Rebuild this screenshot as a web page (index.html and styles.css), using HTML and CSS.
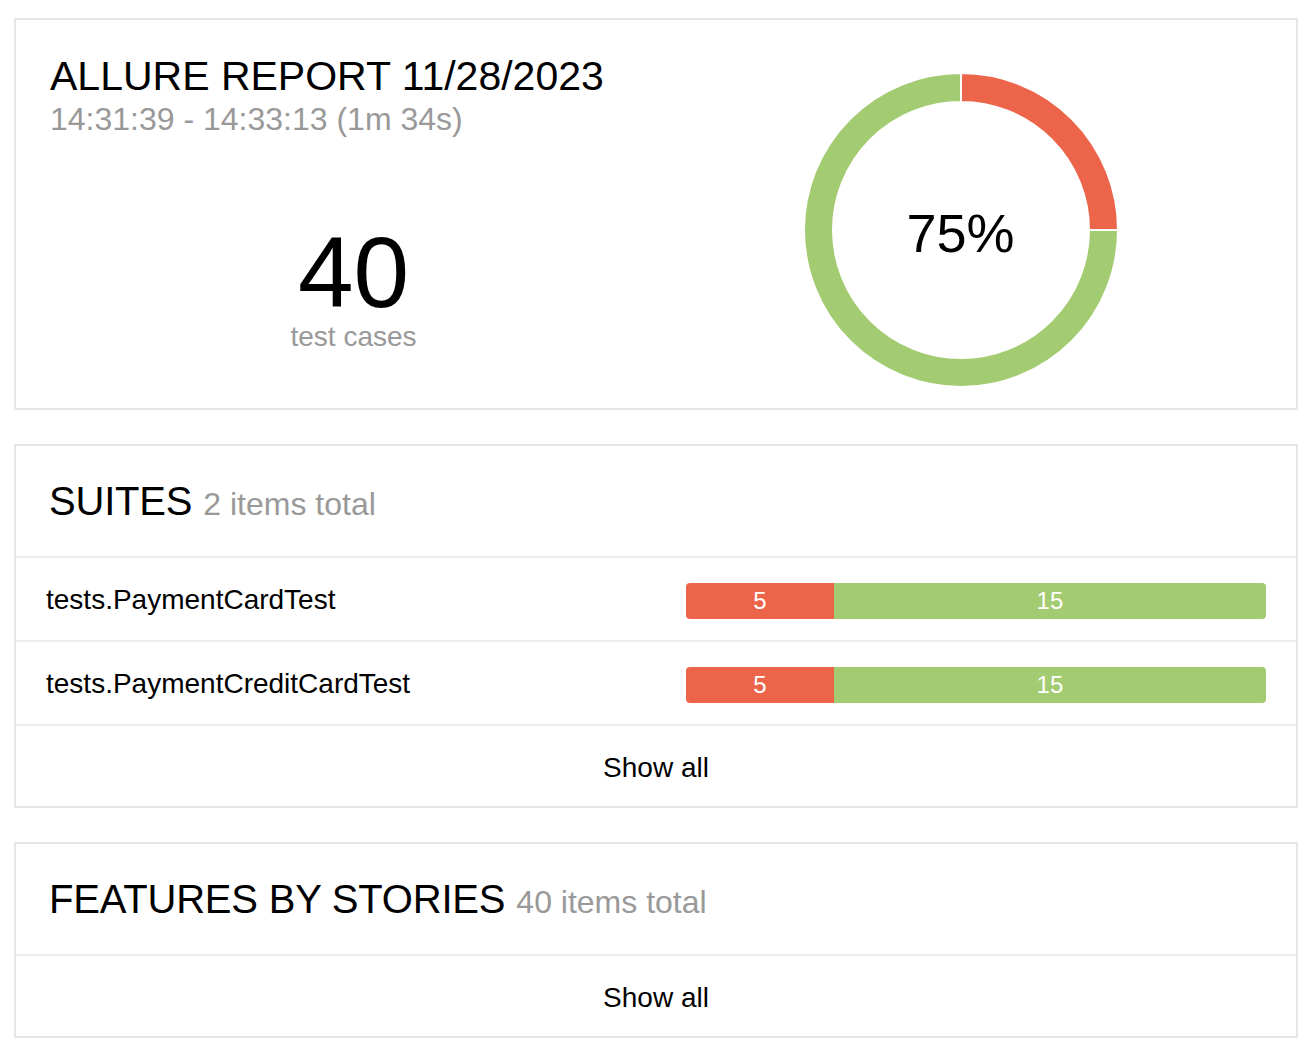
FILE: index.html
```html
<!DOCTYPE html>
<html lang="en">
<head>
<meta charset="utf-8">
<title>Allure Report</title>
<link rel="stylesheet" href="styles.css">
</head>
<body>
<main class="page">
  <section class="card">
    <div class="summary">
      <div class="summary__left">
        <h1 class="summary__title">ALLURE REPORT 11/28/2023</h1>
        <div class="summary__subtitle">14:31:39 - 14:33:13 (1m 34s)</div>
        <div class="summary__stats">
          <div class="summary__count">40</div>
          <div class="summary__label">test cases</div>
        </div>
      </div>
      <div class="summary__right">
        <div class="donut">
          <svg class="donut__svg" width="320" height="320" viewBox="0 0 320 320">
            <path class="donut__passed" d="M317 160 A157 157 0 1 1 160 3 L160 32 A128 128 0 1 0 288 160 Z"/>
            <path class="donut__failed" d="M160 3 A157 157 0 0 1 317 160 L288 160 A128 128 0 0 0 160 32 Z"/>
          </svg>
          <div class="donut__label">75%</div>
        </div>
      </div>
    </div>
  </section>

  <section class="card">
    <div class="card__header">
      <span class="card__title">SUITES</span>
      <span class="card__subtitle">2 items total</span>
    </div>
    <div class="row">
      <div class="row__name">tests.PaymentCardTest</div>
      <div class="bar">
        <div class="bar__seg bar__seg--failed" style="width:25.5%">5</div>
        <div class="bar__seg bar__seg--passed" style="width:74.5%">15</div>
      </div>
    </div>
    <div class="row">
      <div class="row__name">tests.PaymentCreditCardTest</div>
      <div class="bar">
        <div class="bar__seg bar__seg--failed" style="width:25.5%">5</div>
        <div class="bar__seg bar__seg--passed" style="width:74.5%">15</div>
      </div>
    </div>
    <div class="row row--link">Show all</div>
  </section>

  <section class="card">
    <div class="card__header">
      <span class="card__title">FEATURES BY STORIES</span>
      <span class="card__subtitle">40 items total</span>
    </div>
    <div class="row row--link">Show all</div>
  </section>
</main>
</body>
</html>
```

FILE: styles.css
```css
html, body {
  margin: 0;
  padding: 0;
  background: #ffffff;
}

body {
  font-family: "Liberation Sans", Arial, Helvetica, sans-serif;
  color: #000000;
}

.page {
  padding: 18px 16px 0 14px;
}

.card {
  border: 2px solid #e6e6e6;
  background: #ffffff;
  margin-bottom: 34px;
}

.card:last-child {
  margin-bottom: 0;
}

/* Summary card */
.summary {
  display: flex;
  padding: 32px 32px 18px 34px;
}

.summary__left,
.summary__right {
  flex: 1 1 50%;
  min-width: 0;
}

.summary__left {
  display: flex;
  flex-direction: column;
}

.summary__title {
  margin: 0;
  font-size: 41px;
  line-height: 48px;
  font-weight: normal;
}

.summary__subtitle {
  font-size: 32px;
  line-height: 38px;
  color: #999999;
}

.summary__stats {
  margin-top: 86px;
  display: flex;
  flex-direction: column;
  align-items: center;
}

.summary__count {
  font-size: 100px;
  line-height: 96px;
}

.summary__label {
  font-size: 28px;
  line-height: 34px;
  color: #999999;
}

.summary__right {
  display: flex;
  justify-content: center;
}

.donut {
  position: relative;
  width: 320px;
  height: 320px;
  margin-top: 18px;
}

.donut__svg {
  display: block;
}

.donut__passed {
  fill: #a3cb72;
  stroke: #ffffff;
  stroke-width: 2;
}

.donut__failed {
  fill: #ec654a;
  stroke: #ffffff;
  stroke-width: 2;
}

.donut__label {
  position: absolute;
  left: 0;
  right: 0;
  top: 0;
  bottom: 0;
  display: flex;
  align-items: center;
  justify-content: center;
  padding-top: 6px;
  font-size: 54px;
}

/* Section cards */
.card__header {
  height: 110px;
  padding: 0 33px;
  display: flex;
  align-items: center;
  gap: 11px;
}

.card__title {
  font-size: 40px;
  line-height: 48px;
  letter-spacing: -0.2px;
}

.card__subtitle {
  font-size: 32px;
  line-height: 48px;
  color: #999999;
  padding-top: 6px;
}

.row {
  border-top: 2px solid #eeeeee;
  height: 82px;
  padding: 0 30px;
  display: flex;
  align-items: center;
  font-size: 28px;
}

.row__name {
  flex: 1 1 auto;
  padding-top: 1px;
}

.row--link {
  justify-content: center;
  box-sizing: border-box;
  padding-top: 3px;
}

.bar {
  flex: 0 0 580px;
  height: 36px;
  display: flex;
  border-radius: 4px;
  overflow: hidden;
  margin-top: 3px;
}

.bar__seg {
  display: flex;
  align-items: center;
  justify-content: center;
  color: #ffffff;
  font-size: 24px;
}

.bar__seg--failed {
  background: #ec654a;
}

.bar__seg--passed {
  background: #a3cb72;
}
```
